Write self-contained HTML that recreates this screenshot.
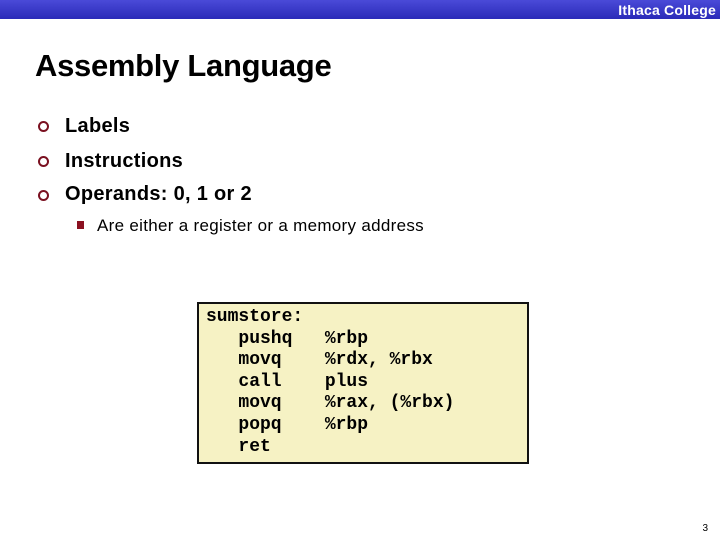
<!DOCTYPE html>
<html><head><meta charset="utf-8"><style>
body{margin:0;width:720px;height:540px;background:#fff;position:relative;overflow:hidden;font-family:"Liberation Sans",sans-serif}
.bar{position:absolute;left:0;top:0;width:720px;height:19px;background:linear-gradient(#4a4ad8,#2a2ab8);}
.bar span{position:absolute;right:4px;top:2px;color:#fff;font-size:14px;font-family:"Liberation Sans Narrow","Liberation Sans",sans-serif;font-weight:bold;letter-spacing:0.2px}
h1{position:absolute;left:35px;top:48px;margin:0;font-size:31px;font-weight:bold;color:#000;letter-spacing:-0.3px}
.b{position:absolute;left:65px;font-size:20px;font-weight:bold;letter-spacing:0.3px}
.o{position:absolute;left:38px;width:7px;height:7px;border:2px solid #7a1020;border-radius:50%}
.sq{position:absolute;left:77px;top:221px;width:7px;height:8px;background:#8b1020}
.sub{position:absolute;left:97px;top:216px;font-size:17px;letter-spacing:0.3px}
.box{position:absolute;left:197px;top:302px;width:328px;height:158px;border:2px solid #111;background:#f6f2c4}
pre{position:absolute;left:206px;top:307px;margin:0;font-family:"Liberation Mono",monospace;font-weight:bold;font-size:18px;line-height:21.6px;color:#000}
.pg{position:absolute;right:12px;top:523px;font-size:10px}
</style></head><body>
<div class="bar"><span>Ithaca College</span></div>
<h1>Assembly Language</h1>
<div class="o" style="top:121px"></div><div class="b" style="top:115px">Labels</div>
<div class="o" style="top:156px"></div><div class="b" style="top:150px">Instructions</div>
<div class="o" style="top:190px"></div><div class="b" style="top:183px">Operands: 0, 1 or 2</div>
<div class="sq"></div><div class="sub">Are either a register or a memory address</div>
<div class="box"></div>
<pre>sumstore:
   pushq   %rbp
   movq    %rdx, %rbx
   call    plus
   movq    %rax, (%rbx)
   popq    %rbp
   ret</pre>
<div class="pg">3</div>
</body></html>
